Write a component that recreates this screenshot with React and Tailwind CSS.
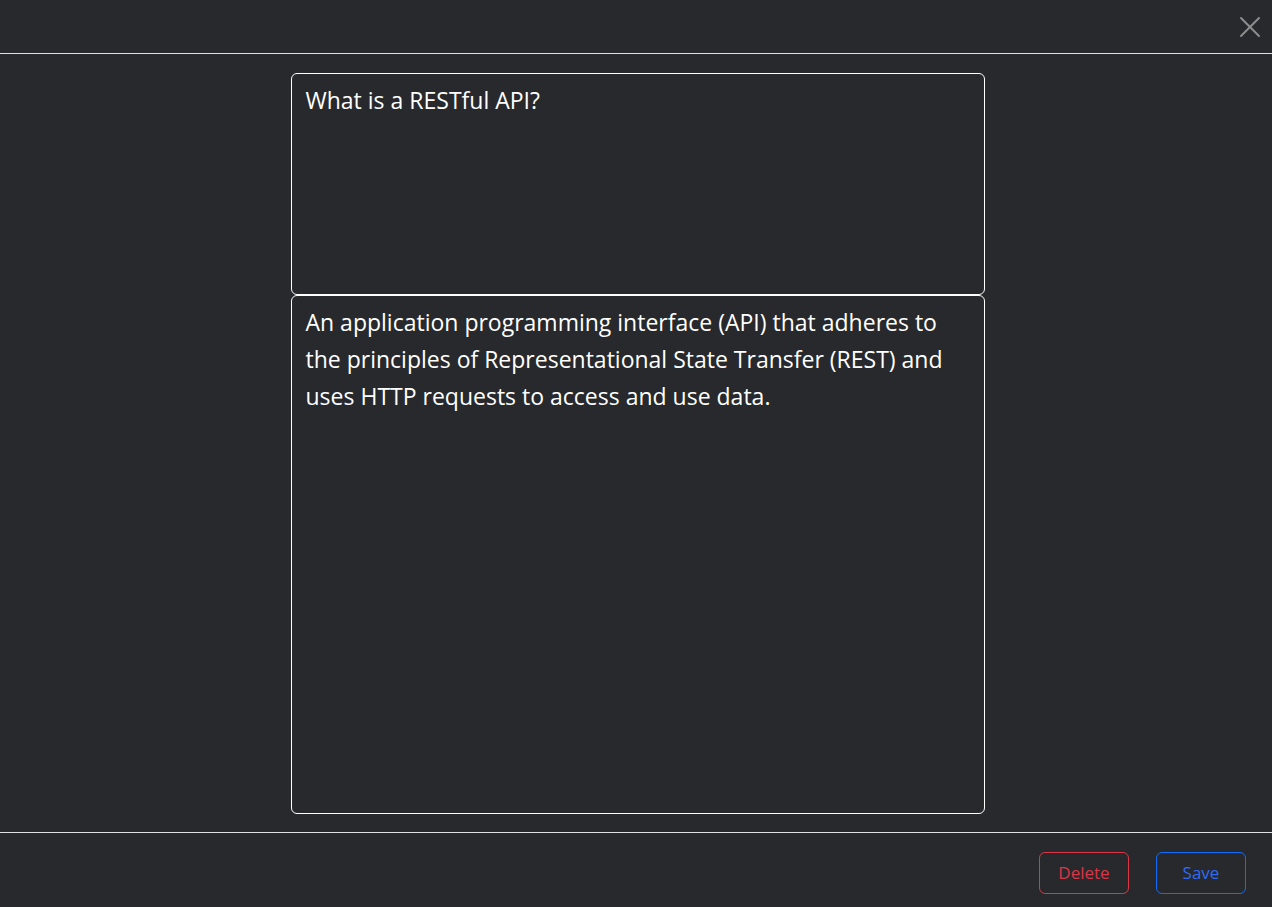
import { X } from 'lucide-react'

export default function App() {
  const font = { fontFamily: '"Open Sans", "Noto Sans", sans-serif' }

  return (
    <div className="flex h-[907px] flex-col bg-[#28292c] text-white" style={font}>
      <div className="flex h-[54px] shrink-0 items-center justify-end border-b border-[#dee2e6] pr-[4px]">
        <button className="flex h-[36px] w-[36px] items-center justify-center text-[#8c8d8f]">
          <X className="h-[36px] w-[36px]" strokeWidth={1.3} />
        </button>
      </div>

      <div className="flex h-[778px] shrink-0 flex-col items-center pl-[3px] pt-[19px]">
        <div className="h-[222px] w-[694px] rounded-[6px] border border-white px-[14px] py-[8px] text-[23px] leading-[37px]">
          What is a RESTful API?
        </div>
        <div className="h-[519px] w-[694px] rounded-[6px] border border-white px-[14px] py-[8px] text-[23px] leading-[37px]">
          An application programming interface (API) that adheres to the principles of Representational State Transfer (REST) and uses HTTP requests to access and use data.
        </div>
      </div>

      <div className="flex flex-1 items-start justify-end gap-[27px] border-t border-[#dee2e6] pr-[26px] pt-[19px]">
        <button className="h-[42px] w-[90px] rounded-[6px] border border-[#dc3545] text-[17px] text-[#dc3545]">
          Delete
        </button>
        <button className="h-[42px] w-[90px] rounded-[6px] border border-[#0d6efd] text-[17px] text-[#2f6cf6]">
          Save
        </button>
      </div>
    </div>
  )
}
